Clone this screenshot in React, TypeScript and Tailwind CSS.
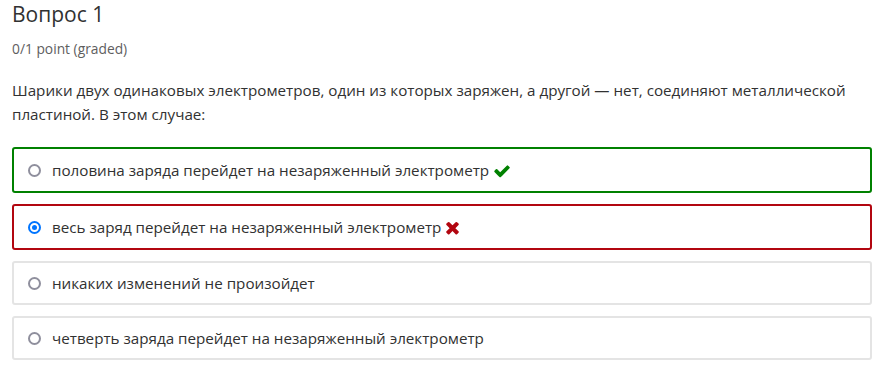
type Option = {
  text: string;
  selected?: boolean;
  status?: 'correct' | 'incorrect';
};

const options: Option[] = [
  { text: 'половина заряда перейдет на незаряженный электрометр', status: 'correct' },
  { text: 'весь заряд перейдет на незаряженный электрометр', selected: true, status: 'incorrect' },
  { text: 'никаких изменений не произойдет' },
  { text: 'четверть заряда перейдет на незаряженный электрометр' },
];

const boxClass = (o: Option) => {
  if (o.status === 'correct') return 'h-[46px] border-[#008100]';
  if (o.status === 'incorrect') return 'h-[46px] border-[#b20610]';
  return 'h-[44px] border-[#e4e4e4]';
};

// font-awesome 4 style glyphs
const CheckIcon = () => (
  <svg viewBox="0 0 1792 1792" className="ml-[4px] inline-block h-[18px] w-[18px] -translate-y-[1px] align-middle" fill="#008100">
    <path d="M1671 566q0 40-28 68l-724 724-136 136q-28 28-68 28t-68-28l-136-136-362-362q-28-28-28-68t28-68l136-136q28-28 68-28t68 28l294 295 656-657q28-28 68-28t68 28l136 136q28 28 28 68z" />
  </svg>
);

const TimesIcon = () => (
  <svg viewBox="0 0 1408 1792" className="ml-[4px] inline-block h-[19px] w-[15px] -translate-y-[1px] align-middle" fill="#b20610">
    <path d="M1298 1322q0 40-28 68l-136 136q-28 28-68 28t-68-28l-294-294-294 294q-28 28-68 28t-68-28l-136-136q-28-28-28-68t28-68l294-294-294-294q-28-28-28-68t28-68l136-136q28-28 68-28t68 28l294 294 294-294q28-28 68-28t68 28l136 136q28 28 28 68t-28 68l-294 294 294 294q28 28 28 68z" />
  </svg>
);

export default function App() {
  return (
    <div className="min-h-screen bg-white pl-3 pr-2 text-[#313131]" style={{ fontFamily: '"Open Sans", sans-serif' }}>
      <h3 className="pt-[1px] text-[21px] leading-[26px] text-[#313131]">Вопрос 1</h3>
      <div className="mt-[14px] text-[13.8px] leading-[16px] text-[#5e5e5e]">0/1 point (graded)</div>

      <p className="mt-[21px] text-[15.2px] leading-[24px] text-[#313131]">
        Шарики двух одинаковых электрометров, один из которых заряжен, а другой — нет, соединяют металлической пластиной. В этом случае:
      </p>

      <div className="mt-[21px] flex flex-col gap-[11px]">
        {options.map((o, i) => (
          <label
            key={i}
            className={`flex items-center gap-[11px] rounded-[3px] border-2 pl-[14px] ${boxClass(o)}`}
          >
            {o.selected ? (
              <span className="flex h-[13px] w-[13px] items-center justify-center rounded-full border-2 border-[#0075ff]">
                <span className="h-[5px] w-[5px] rounded-full bg-[#0075ff]" />
              </span>
            ) : (
              <span className="h-[13px] w-[13px] rounded-full border-2 border-[#8f8f9d]" />
            )}
            <span className="text-[15.2px] leading-[22px] text-[#313131]">
              {o.text}
              {o.status === 'correct' && <CheckIcon />}
              {o.status === 'incorrect' && <TimesIcon />}
            </span>
          </label>
        ))}
      </div>
    </div>
  );
}
